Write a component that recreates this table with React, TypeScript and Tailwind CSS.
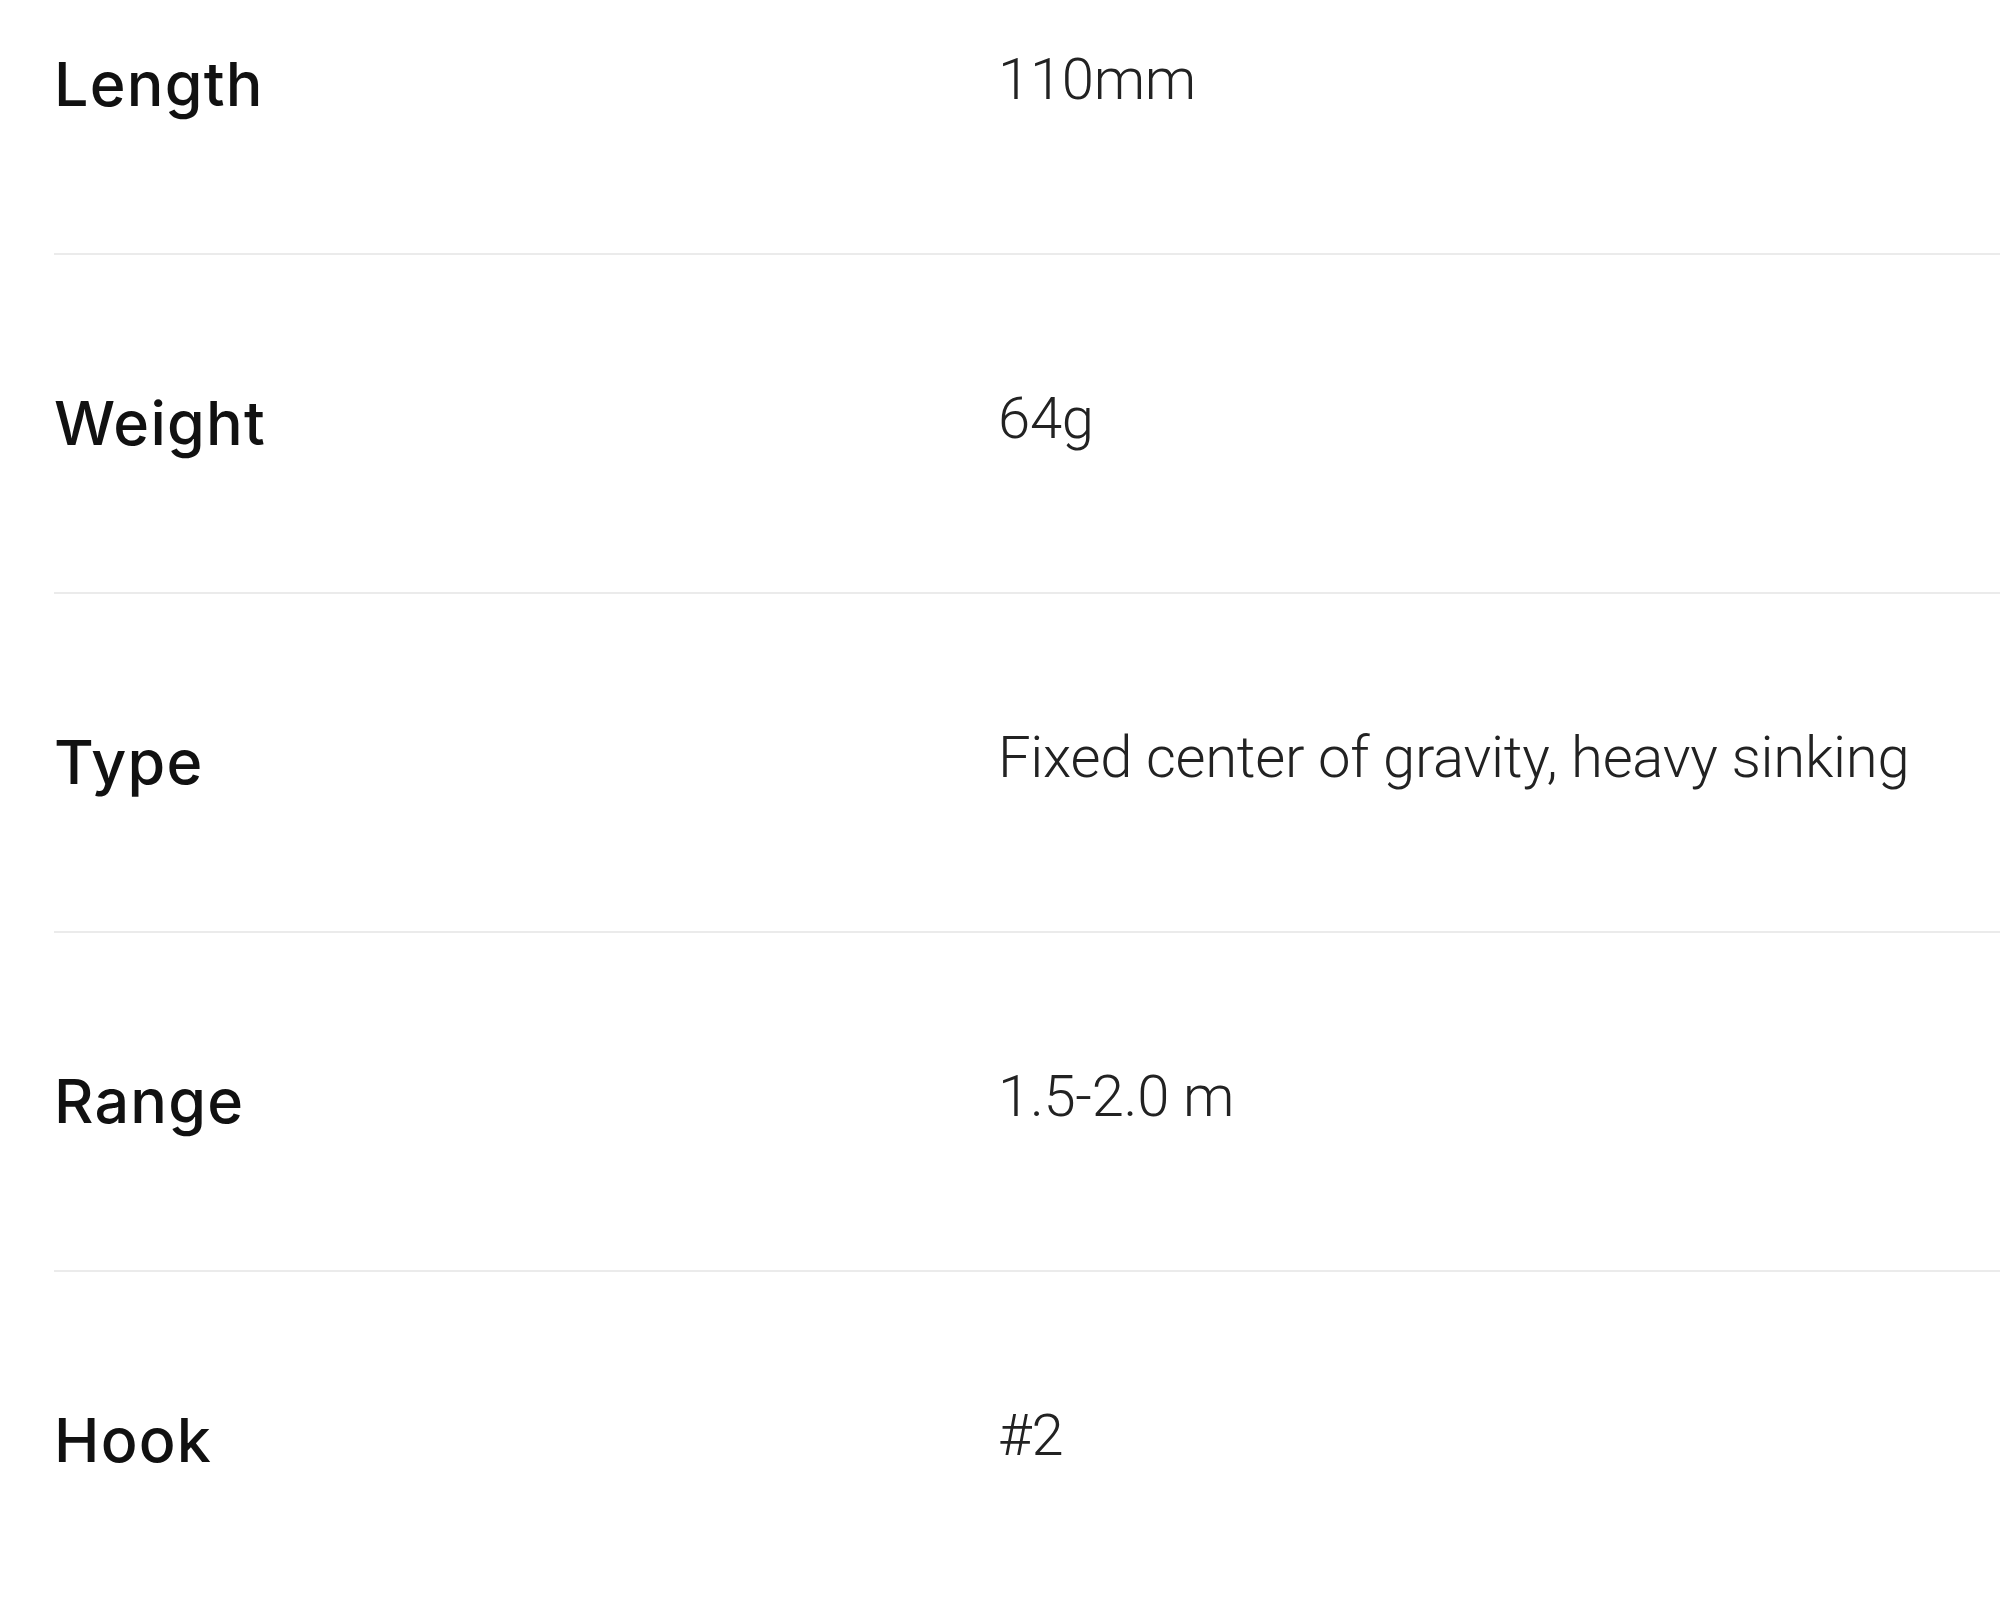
const specs = [
  { label: "Length", value: "110mm" },
  { label: "Weight", value: "64g" },
  { label: "Type", value: "Fixed center of gravity, heavy sinking" },
  { label: "Range", value: "1.5-2.0 m" },
  { label: "Hook", value: "#2" },
];

export default function App() {
  return (
    <div className="h-[1597px] w-full overflow-hidden bg-white">
      <div className="-mt-[84px] pl-[54px]">
        {specs.map((row) => (
          <div
            key={row.label}
            className="flex h-[339px] items-center border-b-2 border-[#ebebeb]"
          >
            <div className="w-[944px] font-['Inter','Liberation_Sans',sans-serif] text-[61px] font-medium tracking-[0.02em] text-[#111]">
              {row.label}
            </div>
            <div className="-mt-[10px] font-['Roboto','Liberation_Sans',sans-serif] text-[58px] font-light tracking-[-0.005em] text-[#222]">
              {row.value}
            </div>
          </div>
        ))}
      </div>
    </div>
  );
}
